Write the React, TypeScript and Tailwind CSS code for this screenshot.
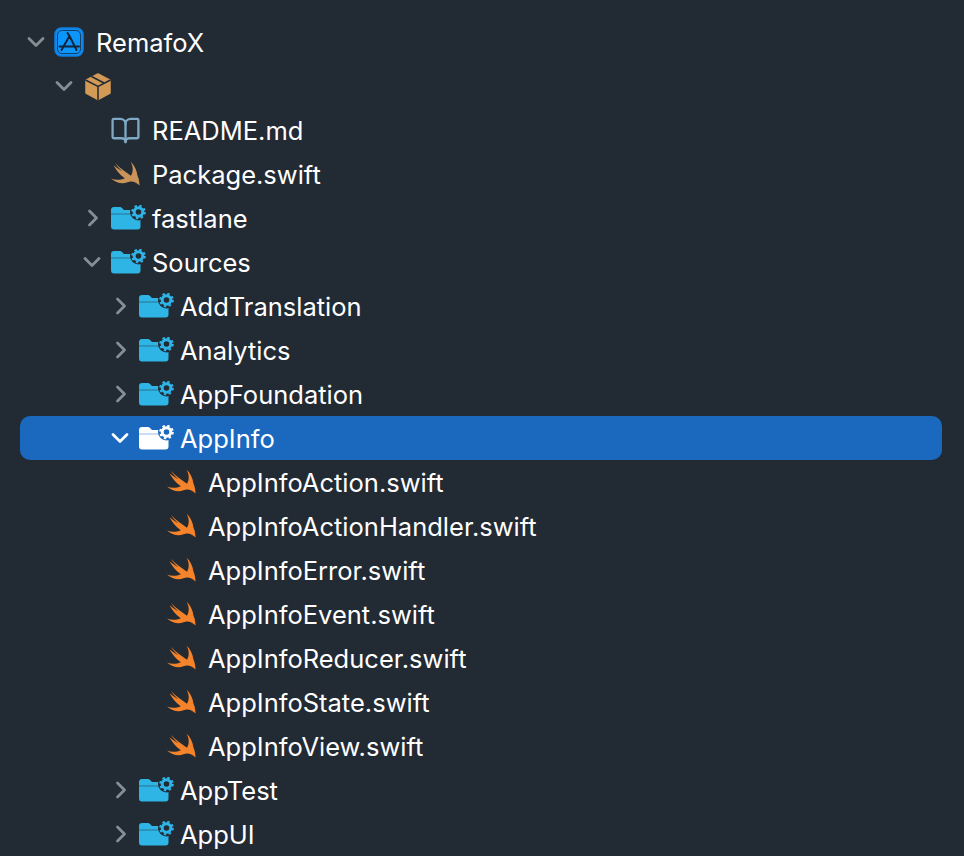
import React from "react";
import { ChevronDown, ChevronRight, BookOpen } from "lucide-react";

type Kind = "app" | "package" | "book" | "swift" | "swiftTan" | "folder";

type Row = {
    name: string;
    depth: 0 | 1 | 2 | 3 | 4;
    kind: Kind;
    open?: boolean;
    selected?: boolean;
};

const rows: Row[] = [
    { name: "RemafoX", depth: 0, kind: "app", open: true },
    { name: "", depth: 1, kind: "package", open: true },
    { name: "README.md", depth: 2, kind: "book" },
    { name: "Package.swift", depth: 2, kind: "swiftTan" },
    { name: "fastlane", depth: 2, kind: "folder", open: false },
    { name: "Sources", depth: 2, kind: "folder", open: true },
    { name: "AddTranslation", depth: 3, kind: "folder", open: false },
    { name: "Analytics", depth: 3, kind: "folder", open: false },
    { name: "AppFoundation", depth: 3, kind: "folder", open: false },
    { name: "AppInfo", depth: 3, kind: "folder", open: true, selected: true },
    { name: "AppInfoAction.swift", depth: 4, kind: "swift" },
    { name: "AppInfoActionHandler.swift", depth: 4, kind: "swift" },
    { name: "AppInfoError.swift", depth: 4, kind: "swift" },
    { name: "AppInfoEvent.swift", depth: 4, kind: "swift" },
    { name: "AppInfoReducer.swift", depth: 4, kind: "swift" },
    { name: "AppInfoState.swift", depth: 4, kind: "swift" },
    { name: "AppInfoView.swift", depth: 4, kind: "swift" },
    { name: "AppTest", depth: 3, kind: "folder", open: false },
    { name: "AppUI", depth: 3, kind: "folder", open: false },
];

const indent = ["pl-[6px]", "pl-[34px]", "pl-[62px]", "pl-[90px]", "pl-[118px]"];

function SwiftIcon({ color }: { color: string }) {
    return (
        <svg width="30" height="26" viewBox="0 0 30 26" fill={color} className="shrink-0">
            <path d="M1 17.500C6 22 12.500 23.500 17.500 21.200C21.500 19.500 25.500 20.500 29.500 24.500C29.300 21.500 29.200 18 27.500 14.800C26.800 9 24.500 4.500 20.500 0.500C23 5 23.700 10 21 14.800C16 11.500 10 7 5 2C7 5 9.300 7.700 12.300 10.300C9.300 8.500 6.500 6.700 3.500 4.300C6 9 9.800 13.800 14.800 17.300C10 19.300 5.500 19.300 1 17.500Z" />
        </svg>
    );
}

function FolderIcon({ selected }: { selected?: boolean }) {
    const fill = selected ? "#ffffff" : "#2fb4e6";
    const bg = selected ? "#1a69bf" : "#222a33";
    return (
        <svg width="42" height="26" viewBox="0 0 42 26" className="shrink-0">
            <path d="M7 5C7 3 8 2 10 2H15.500C17 2 17.500 2.500 18.500 3.500L20 5H33C35.500 5 36.500 6 36.500 8.500V21.500C36.500 23.500 35.500 24.500 33.500 24.500H10C8 24.500 7 23.500 7 21.500Z" fill={fill} />
            <path d="M7 9H27" stroke={bg} strokeWidth="1" opacity="0.45" />
            <circle cx="34.500" cy="7" r="8.500" fill={bg} />
            <circle cx="34.500" cy="7" r="4.300" fill="none" stroke={fill} strokeWidth="3" />
            <circle cx="34.500" cy="7" r="6.200" fill="none" stroke={fill} strokeWidth="2.200" strokeDasharray="2.430 2.440" />
        </svg>
    );
}

function AppIcon() {
    return (
        <svg width="30" height="30" viewBox="0 0 30 30" fill="none" className="shrink-0">
            <rect x="1" y="1" width="28" height="28" rx="6.500" fill="#0f8cf2" stroke="#0f7fe0" strokeWidth="1.500" />
            <rect x="3.500" y="3.500" width="23" height="23" rx="4.500" fill="#0a96fb" stroke="#16283e" strokeWidth="0.800" />
            <path d="M15.500 9L7.500 23M15.500 9L22.500 23M13.500 6L15.500 9M5.500 19.500H25" stroke="#12243a" strokeWidth="2" strokeLinecap="round" />
        </svg>
    );
}

function PackageIcon() {
    return (
        <svg width="28" height="29" viewBox="0 0 28 29" fill="none" className="shrink-0 translate-x-px">
            <path d="M14 2L26 8.200V21L14 27.500L2 21V8.200Z" fill="#d39a56" stroke="#d39a56" strokeWidth="1.500" strokeLinejoin="round" />
            <path d="M1.500 8L14 14.500L26.500 8M14 14.500V28" stroke="#222a33" strokeWidth="1.500" />
            <path d="M7.500 4.500L20 11" stroke="#222a33" strokeWidth="1.500" />
        </svg>
    );
}

function RowIcon({ row }: { row: Row }) {
    if (row.kind === "app") return <AppIcon />;
    if (row.kind === "package") return <PackageIcon />;
    if (row.kind === "book") return <BookOpen size={31} strokeWidth={1.8} className="shrink-0 text-[#7fa8c4]" />;
    if (row.kind === "swift") return <SwiftIcon color="#f5832a" />;
    if (row.kind === "swiftTan") return <SwiftIcon color="#c9935a" />;
    return <FolderIcon selected={row.selected} />;
}

function TreeRow({ row }: { row: Row }) {
    return (
        <div className={`flex h-11 items-center rounded-[10px] ${indent[row.depth]} ${row.selected ? "bg-[#1a69bf]" : ""}`}>
            <div className={`flex w-5 justify-center ${row.selected ? "text-white" : "text-[#868e95]"}`}>
                {row.open === true && <ChevronDown size={28} strokeWidth={2.4} className="shrink-0" />}
                {row.open === false && <ChevronRight size={28} strokeWidth={2.4} className="shrink-0 translate-x-px" />}
            </div>
            <div className="ml-[6px] flex w-[34px] justify-center">
                <RowIcon row={row} />
            </div>
            <span className="ml-[10px] pt-px text-[25.5px] leading-none text-white">{row.name}</span>
        </div>
    );
}

export default function App() {
    return (
        <div className="h-[856px] w-[964px] overflow-hidden bg-[#222a33] pt-5 pl-5 pr-[22px] font-['Inter',sans-serif]">
            {rows.map((row, i) => (
                <TreeRow key={i} row={row} />
            ))}
        </div>
    );
}
